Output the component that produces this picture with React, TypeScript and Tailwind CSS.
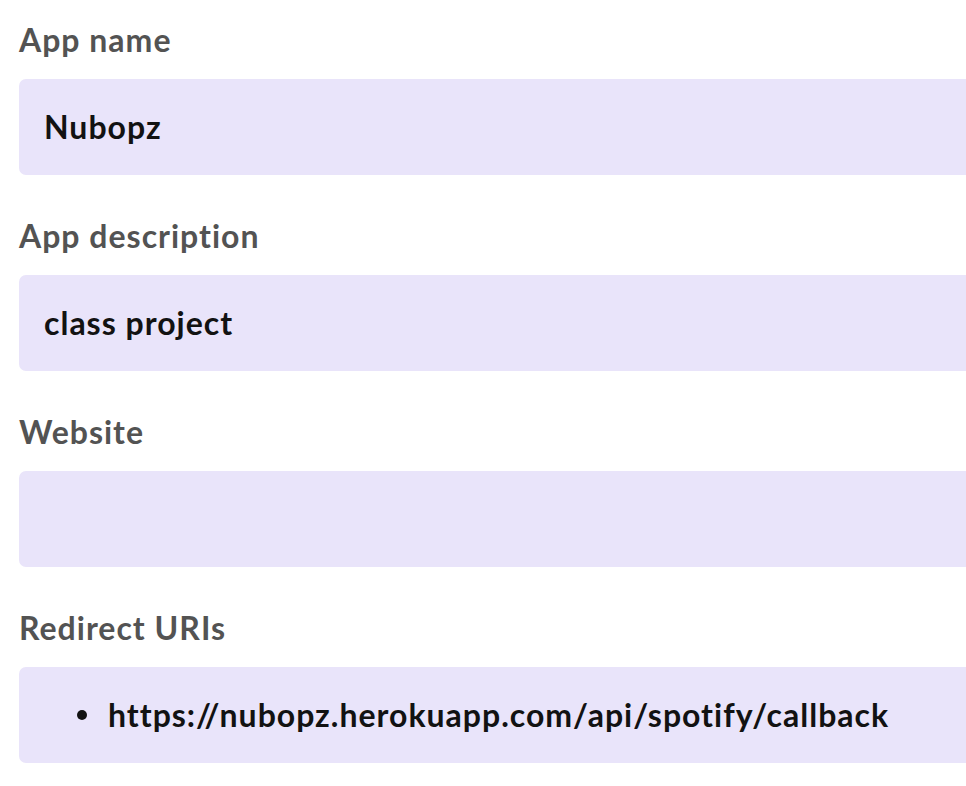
import React from "react";

const fields = [
  { label: "App name", value: "Nubopz" },
  { label: "App description", value: "class project" },
  { label: "Website", value: "" },
];

function Field({ label, children }: { label: string; children?: React.ReactNode }) {
  return (
    <div className="flex flex-col">
      <label className="h-[79px] pt-[20px] text-[32px] leading-[40px] tracking-[1px] font-bold text-[#535353]">
        {label}
      </label>
      <div className="h-[96px] rounded-l-[7px] bg-[#e9e4fa] flex items-center text-[32px] tracking-[1px] font-bold text-[#121212]">
        {children}
      </div>
    </div>
  );
}

export default function App() {
  return (
    <div
      className="w-full min-h-[786px] bg-white pl-[19px] overflow-hidden flex flex-col gap-[21px]"
      style={{ fontFamily: "Lato, 'Noto Sans', sans-serif" }}
    >
      {fields.map((f) => (
        <Field key={f.label} label={f.label}>
          <span className="pl-[25px]">{f.value}</span>
        </Field>
      ))}
      <Field label="Redirect URIs">
        <ul className="flex items-center pl-[58px]">
          <li className="flex items-center gap-[21px]">
            <span className="size-[10px] rounded-full bg-[#121212]" />
            https://nubopz.herokuapp.com/api/spotify/callback
          </li>
        </ul>
      </Field>
    </div>
  );
}
